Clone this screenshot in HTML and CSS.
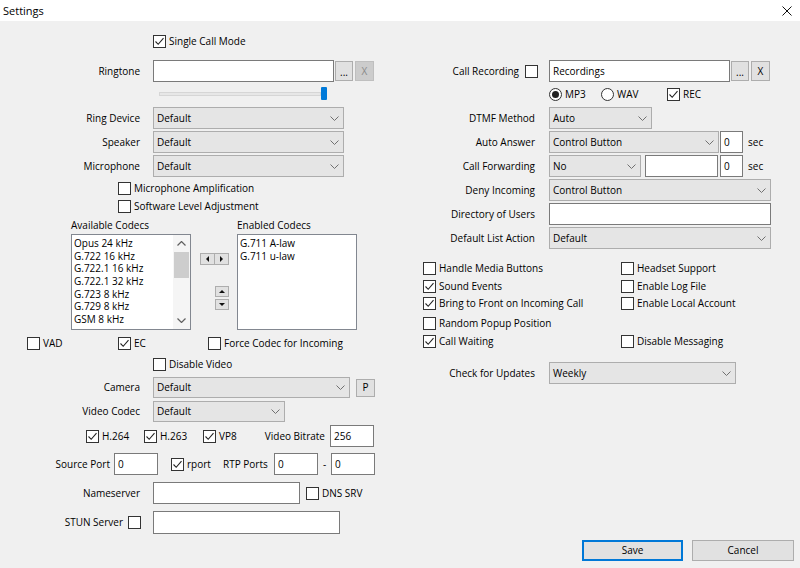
FILE: index.html
```html
<!DOCTYPE html>
<html lang="en">
<head>
<meta charset="utf-8">
<title>Settings</title>
<link rel="stylesheet" href="styles.css">
</head>
<body>
<div class="titlebar">
  <span class="title">Settings</span>
  <svg class="close" width="10" height="10" viewBox="0 0 10 10"><path d="M0.5 0.5L9.5 9.5M9.5 0.5L0.5 9.5" stroke="#111" stroke-width="1" fill="none"/></svg>
</div>
<div class="main">
  <div class="col">
    <div class="row mt13 h15 pl153">
      <span class="cb"><span class="chk"><svg viewBox="0 0 11 11"><polyline points="1.5,5.5 4.2,8.3 9.5,2.2"/></svg></span>Single Call Mode</span>
    </div>
    <div class="row mt11 h22">
      <span class="lbl">Ringtone</span>
      <span class="edit w181"></span>
      <span class="btn dots ml1 w18">...</span>
      <span class="btn dis ml2 w19">X</span>
    </div>
    <div class="row mt5 h13 pl159">
      <span class="track"></span><span class="thumb"></span>
    </div>
    <div class="row mt7 h22">
      <span class="lbl">Ring Device</span>
      <span class="combo w191">Default<svg class="chev" viewBox="0 0 9 5"><polyline points="0.5,0.5 4.5,4.5 8.5,0.5"/></svg></span>
    </div>
    <div class="row mt2 h22">
      <span class="lbl">Speaker</span>
      <span class="combo w191">Default<svg class="chev" viewBox="0 0 9 5"><polyline points="0.5,0.5 4.5,4.5 8.5,0.5"/></svg></span>
    </div>
    <div class="row mt2 h22">
      <span class="lbl">Microphone</span>
      <span class="combo w191">Default<svg class="chev" viewBox="0 0 9 5"><polyline points="0.5,0.5 4.5,4.5 8.5,0.5"/></svg></span>
    </div>
    <div class="row mt3 h16 pl118">
      <span class="cb"><span class="chk"></span>Microphone Amplification</span>
    </div>
    <div class="row mt2 h16 pl118">
      <span class="cb"><span class="chk"></span>Software Level Adjustment</span>
    </div>
    <div class="row mt4 h14 pl71">
      <span class="w166">Available Codecs</span><span>Enabled Codecs</span>
    </div>
    <div class="row mt2 h96 pl71 stretch">
      <div class="list w120">
        <div class="items">
          <div>Opus 24 kHz</div>
          <div>G.722 16 kHz</div>
          <div>G.722.1 16 kHz</div>
          <div>G.722.1 32 kHz</div>
          <div>G.723 8 kHz</div>
          <div>G.729 8 kHz</div>
          <div>GSM 8 kHz</div>
        </div>
        <div class="sbar">
          <span class="sarrow"><svg class="schev" viewBox="0 0 9 5"><polyline points="0.5,4.5 4.5,0.5 8.5,4.5"/></svg></span>
          <span class="strack"><span class="sthumb"></span></span>
          <span class="sarrow"><svg class="schev" viewBox="0 0 9 5"><polyline points="0.5,0.5 4.5,4.5 8.5,0.5"/></svg></span>
        </div>
      </div>
      <div class="mid w46">
        <div class="pair">
          <span class="abtn"><span class="tri tl"></span></span><span class="abtn"><span class="tri tr"></span></span>
        </div>
        <div class="updown">
          <span class="abtn ab-up"><span class="tri tu"></span></span>
          <span class="abtn ab-dn"><span class="tri td"></span></span>
        </div>
      </div>
      <div class="list w120">
        <div class="items">
          <div>G.711 A-law</div>
          <div>G.711 u-law</div>
        </div>
      </div>
    </div>
    <div class="row mt5 h16 pl27">
      <span class="cb w91"><span class="chk"></span>VAD</span>
      <span class="cb w90"><span class="chk"><svg viewBox="0 0 11 11"><polyline points="1.5,5.5 4.2,8.3 9.5,2.2"/></svg></span>EC</span>
      <span class="cb"><span class="chk"></span>Force Codec for Incoming</span>
    </div>
    <div class="row mt5 h16 pl153">
      <span class="cb"><span class="chk"></span>Disable Video</span>
    </div>
    <div class="row mt5 h21">
      <span class="lbl">Camera</span>
      <span class="combo w197">Default<svg class="chev" viewBox="0 0 9 5"><polyline points="0.5,0.5 4.5,4.5 8.5,0.5"/></svg></span>
      <span class="btn ml6 w19 h18">P</span>
    </div>
    <div class="row mt3 h21">
      <span class="lbl">Video Codec</span>
      <span class="combo w132">Default<svg class="chev" viewBox="0 0 9 5"><polyline points="0.5,0.5 4.5,4.5 8.5,0.5"/></svg></span>
    </div>
    <div class="row mt3 h22 pl86 pr26">
      <span class="cb w58"><span class="chk"><svg viewBox="0 0 11 11"><polyline points="1.5,5.5 4.2,8.3 9.5,2.2"/></svg></span>H.264</span>
      <span class="cb w59"><span class="chk"><svg viewBox="0 0 11 11"><polyline points="1.5,5.5 4.2,8.3 9.5,2.2"/></svg></span>H.263</span>
      <span class="cb"><span class="chk"><svg viewBox="0 0 11 11"><polyline points="1.5,5.5 4.2,8.3 9.5,2.2"/></svg></span>VP8</span>
      <span class="fill">Video Bitrate</span>
      <span class="edit w44">256</span>
    </div>
    <div class="row mt6 h22">
      <span class="lbl-sp">Source Port</span>
      <span class="edit w44">0</span>
      <span class="cb ml13 w52"><span class="chk"><svg viewBox="0 0 11 11"><polyline points="1.5,5.5 4.2,8.3 9.5,2.2"/></svg></span>rport</span>
      <span class="w51">RTP Ports</span>
      <span class="edit w44">0</span>
      <span class="dash">-</span>
      <span class="edit w44">0</span>
    </div>
    <div class="row mt7 h22">
      <span class="lbl">Nameserver</span>
      <span class="edit w147"></span>
      <span class="cb ml6"><span class="chk"></span>DNS SRV</span>
    </div>
    <div class="row mt7 h23">
      <span class="lbl-stun">STUN Server</span>
      <span class="chk ml5"></span>
      <span class="edit ml12 w187"></span>
    </div>
  </div>

  <div class="col">
    <div class="row mt39 h22">
      <span class="lbl-rec">Call Recording</span>
      <span class="chk ml6"></span>
      <span class="edit ml11 w181">Recordings</span>
      <span class="btn dots ml1 w18">...</span>
      <span class="btn ml2 w19">X</span>
    </div>
    <div class="row mt5 h14 pl149">
      <span class="cb w52"><span class="rad on"></span>MP3</span>
      <span class="cb w66"><span class="rad"></span>WAV</span>
      <span class="cb"><span class="chk"><svg viewBox="0 0 11 11"><polyline points="1.5,5.5 4.2,8.3 9.5,2.2"/></svg></span>REC</span>
    </div>
    <div class="row mt6 h22">
      <span class="lbl-r">DTMF Method</span>
      <span class="combo w103">Auto<svg class="chev" viewBox="0 0 9 5"><polyline points="0.5,0.5 4.5,4.5 8.5,0.5"/></svg></span>
    </div>
    <div class="row mt2 h22">
      <span class="lbl-r">Auto Answer</span>
      <span class="combo w170">Control Button<svg class="chev" viewBox="0 0 9 5"><polyline points="0.5,0.5 4.5,4.5 8.5,0.5"/></svg></span>
      <span class="edit ml1 w23">0</span>
      <span class="ml5">sec</span>
    </div>
    <div class="row mt2 h22">
      <span class="lbl-r">Call Forwarding</span>
      <span class="combo w92">No<svg class="chev" viewBox="0 0 9 5"><polyline points="0.5,0.5 4.5,4.5 8.5,0.5"/></svg></span>
      <span class="edit ml4 w73"></span>
      <span class="edit ml2 w23">0</span>
      <span class="ml5">sec</span>
    </div>
    <div class="row mt2 h22">
      <span class="lbl-r">Deny Incoming</span>
      <span class="combo w222">Control Button<svg class="chev" viewBox="0 0 9 5"><polyline points="0.5,0.5 4.5,4.5 8.5,0.5"/></svg></span>
    </div>
    <div class="row mt2 h22">
      <span class="lbl-r">Directory of Users</span>
      <span class="edit w222"></span>
    </div>
    <div class="row mt2 h22">
      <span class="lbl-r">Default List Action</span>
      <span class="combo w222">Default<svg class="chev" viewBox="0 0 9 5"><polyline points="0.5,0.5 4.5,4.5 8.5,0.5"/></svg></span>
    </div>
    <div class="opts mt11">
      <div class="orow h18">
        <span class="cb w198"><span class="chk"></span>Handle Media Buttons</span>
        <span class="cb"><span class="chk"></span>Headset Support</span>
      </div>
      <div class="orow h17">
        <span class="cb w198"><span class="chk"><svg viewBox="0 0 11 11"><polyline points="1.5,5.5 4.2,8.3 9.5,2.2"/></svg></span>Sound Events</span>
        <span class="cb"><span class="chk"></span>Enable Log File</span>
      </div>
      <div class="orow h20">
        <span class="cb w198"><span class="chk"><svg viewBox="0 0 11 11"><polyline points="1.5,5.5 4.2,8.3 9.5,2.2"/></svg></span>Bring to Front on Incoming Call</span>
        <span class="cb"><span class="chk"></span>Enable Local Account</span>
      </div>
      <div class="orow h18">
        <span class="cb w198"><span class="chk"></span>Random Popup Position</span>
      </div>
      <div class="orow h16">
        <span class="cb w198"><span class="chk"><svg viewBox="0 0 11 11"><polyline points="1.5,5.5 4.2,8.3 9.5,2.2"/></svg></span>Call Waiting</span>
        <span class="cb"><span class="chk"></span>Disable Messaging</span>
      </div>
    </div>
    <div class="row mt13 h22">
      <span class="lbl-r">Check for Updates</span>
      <span class="combo w187">Weekly<svg class="chev" viewBox="0 0 9 5"><polyline points="0.5,0.5 4.5,4.5 8.5,0.5"/></svg></span>
    </div>
    <div class="actions">
      <span class="btn pbtn default">Save</span>
      <span class="btn pbtn cancel">Cancel</span>
    </div>
  </div>
</div>
</body>
</html>
```

FILE: styles.css
```css
* { box-sizing: border-box; }
html, body { margin: 0; padding: 0; }
body {
  width: 800px;
  height: 568px;
  overflow: hidden;
  background: #f0f0f0;
  color: #000;
  font-family: "Open Sans", "Noto Sans", "DejaVu Sans", sans-serif;
  font-size: 10px;
  line-height: 13px;
}

.titlebar {
  height: 21px;
  background: #fff;
  display: flex;
  align-items: center;
  justify-content: space-between;
  padding: 0 8px 0 3px;
}
.title { font-size: 11px; }
.close { display: block; }

.main { display: flex; height: 547px; }
.col { width: 400px; display: flex; flex-direction: column; }

.row { display: flex; align-items: center; flex: none; white-space: nowrap; }
.stretch { align-items: stretch; }

/* heights */
.h13 { height: 13px; } .h14 { height: 14px; } .h15 { height: 15px; } .h16 { height: 16px; }
.h17 { height: 17px; } .h18 { height: 18px; } .h20 { height: 20px; } .h21 { height: 21px; }
.h22 { height: 22px; } .h23 { height: 23px; } .h96 { height: 96px; }

/* margins */
.mt2 { margin-top: 2px; } .mt3 { margin-top: 3px; } .mt4 { margin-top: 4px; } .mt5 { margin-top: 5px; }
.mt6 { margin-top: 6px; } .mt7 { margin-top: 7px; } .mt11 { margin-top: 11px; } .mt13 { margin-top: 13px; }
.mt39 { margin-top: 39px; }
.ml1 { margin-left: 1px; } .ml2 { margin-left: 2px; } .ml4 { margin-left: 4px; } .ml5 { margin-left: 5px; }
.ml6 { margin-left: 6px; } .ml11 { margin-left: 11px; } .ml12 { margin-left: 12px; } .ml13 { margin-left: 13px; }

/* paddings */
.pl27 { padding-left: 27px; } .pl71 { padding-left: 71px; } .pl86 { padding-left: 86px; }
.pl118 { padding-left: 118px; } .pl149 { padding-left: 149px; } .pl153 { padding-left: 153px; }
.pl159 { padding-left: 159px; } .pr26 { padding-right: 26px; }

/* widths */
.w18 { width: 18px; } .w19 { width: 19px; } .w23 { width: 23px; } .w44 { width: 44px; }
.w46 { width: 46px; } .w51 { width: 51px; } .w52 { width: 52px; } .w58 { width: 58px; }
.w59 { width: 59px; } .w66 { width: 66px; } .w73 { width: 73px; } .w90 { width: 90px; }
.w91 { width: 91px; } .w92 { width: 92px; } .w103 { width: 103px; } .w120 { width: 120px; }
.w132 { width: 132px; } .w147 { width: 147px; } .w166 { width: 166px; } .w170 { width: 170px; }
.w181 { width: 181px; } .w187 { width: 187px; } .w191 { width: 191px; } .w197 { width: 197px; }
.w198 { width: 198px; } .w222 { width: 222px; }

/* labels */
.lbl { width: 140px; margin-right: 13px; text-align: right; flex: none; }
.lbl-sp { width: 110px; margin-right: 4px; text-align: right; flex: none; }
.lbl-stun { width: 123px; text-align: right; flex: none; }
.lbl-rec { width: 119px; text-align: right; flex: none; }
.lbl-r { width: 135px; margin-right: 14px; text-align: right; flex: none; }
.fill { flex: 1; text-align: right; margin-right: 5px; }
.dash { width: 13px; text-align: center; flex: none; }

/* checkbox / radio */
.cb { display: inline-flex; align-items: center; gap: 3px; flex: none; height: 16px; }
.chk {
  width: 13px; height: 13px; flex: none;
  border: 1px solid #333; background: #fff;
  display: inline-flex; align-items: center; justify-content: center;
}
.chk svg { width: 11px; height: 11px; display: block; }
.chk polyline { fill: none; stroke: #222; stroke-width: 1.1; }
.rad {
  width: 13px; height: 13px; flex: none;
  border: 1px solid #333; border-radius: 50%; background: #fff;
  display: inline-flex; align-items: center; justify-content: center;
}
.rad.on::after { content: ""; width: 7px; height: 7px; border-radius: 50%; background: #222; }

/* inputs */
.edit {
  height: 100%; flex: none;
  border: 1px solid #7a7a7a; background: #fff;
  display: inline-flex; align-items: center; padding: 0 3px;
}
.combo {
  height: 100%; flex: none;
  border: 1px solid #adadad; background: #e5e5e5;
  display: inline-flex; align-items: center; justify-content: space-between;
  padding: 0 4px 0 3px;
}
.chev { width: 9px; height: 5px; display: block; }
.chev polyline { fill: none; stroke: #707070; stroke-width: 1; }

.btn {
  height: 20px; flex: none;
  border: 1px solid #adadad; background: #e1e1e1;
  display: inline-flex; align-items: center; justify-content: center;
}
.btn.h18 { height: 18px; }
.btn.dots { align-items: flex-end; padding-bottom: 4px; line-height: 8px; }
.btn.dis { background: #cccccc; border-color: #bfbfbf; color: #8a8a8a; }

/* slider */
.track { width: 162px; height: 4px; background: #e7e7e7; border: 1px solid #d6d6d6; flex: none; }
.thumb { width: 6px; height: 13px; background: #007ad9; border-radius: 1px; flex: none; }

/* codec lists */
.list {
  flex: none; display: flex;
  border: 1px solid #828790; background: #fff;
  overflow: hidden;
}
.items { flex: 1; padding: 2px 0 0 2px; line-height: 12.67px; overflow: hidden; }
.sbar { width: 17px; flex: none; display: flex; flex-direction: column; background: #f5f5f5; }
.sarrow { height: 17px; display: flex; align-items: center; justify-content: center; flex: none; }
.schev { width: 9px; height: 5px; display: block; }
.schev polyline { fill: none; stroke: #606060; stroke-width: 1.2; }
.strack { flex: 1; display: flex; flex-direction: column; padding: 0 1px; }
.sthumb { height: 26px; background: #cdcdcd; flex: none; }

.mid { flex: none; display: flex; flex-direction: column; padding-left: 9px; }
.pair { display: flex; margin-top: 19px; }
.updown { display: flex; flex-direction: column; gap: 2px; margin-top: 21px; margin-left: 15px; }
.abtn {
  width: 15px; height: 12px; flex: none;
  border: 1px solid #adadad; background: #e1e1e1;
  display: flex; align-items: center; justify-content: center;
}
.pair .abtn + .abtn { border-left: none; width: 14px; }
.updown .abtn { width: 14px; height: 11px; }
.tri { width: 0; height: 0; display: block; }
.tl { border-top: 3px solid transparent; border-bottom: 3px solid transparent; border-right: 3px solid #111; }
.tr { border-top: 3px solid transparent; border-bottom: 3px solid transparent; border-left: 3px solid #111; }
.tu { border-left: 3px solid transparent; border-right: 3px solid transparent; border-bottom: 3px solid #111; }
.td { border-left: 3px solid transparent; border-right: 3px solid transparent; border-top: 3px solid #111; }

/* options grid */
.opts { display: flex; flex-direction: column; padding-left: 23px; flex: none; }
.orow { display: flex; align-items: flex-start; white-space: nowrap; }

/* dialog buttons */
.actions {
  margin-top: auto;
  display: flex; justify-content: flex-end; gap: 9px;
  padding: 0 6px 7px 0;
}
.pbtn { height: 21px; }
.default { width: 101px; border-color: #0078d7; box-shadow: inset 0 0 0 1px #0078d7; }
.cancel { width: 102px; }
```
